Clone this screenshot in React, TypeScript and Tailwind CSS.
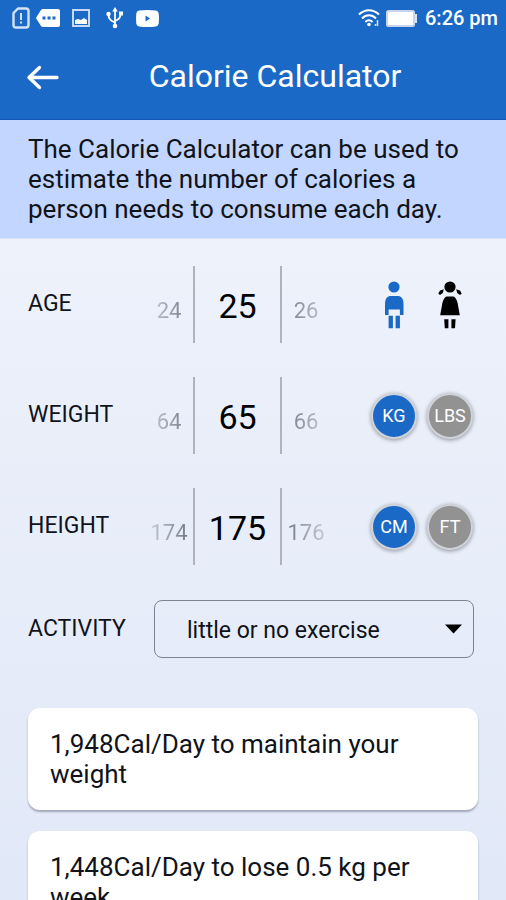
import React, { useState } from 'react';

interface PickerProps {
  label: string;
  value: number;
  onChange: (value: number) => void;
}

interface UnitToggleProps {
  name: string;
  options: string[];
  selected: string;
  onSelect: (unit: string) => void;
}

const IconSim = () => (
  <svg width="18" height="22" viewBox="0 0 18 22" fill="none">
    <path d="M6 1.500h8a2.500 2.500 0 0 1 2.500 2.500v14a2.500 2.500 0 0 1-2.500 2.500H4A2.500 2.500 0 0 1 1.500 18V6z" stroke="#d5e2f7" strokeWidth="2.400" strokeLinejoin="round" />
    <path d="M9 6v7M9 14.500v2" stroke="white" strokeWidth="1.600" />
  </svg>
);

const IconMessage = () => (
  <svg width="24" height="18" viewBox="0 0 24 18">
    <path d="M7 0h15a2 2 0 0 1 2 2v14a2 2 0 0 1-2 2H7q-1 0-2-1L.5 10q-.7-1 0-2L5 1q1-1 2-1z" fill="white" />
    <path d="M6.500 7.500h3v3h-3zM11.500 7.500h3v3h-3zM16.500 7.500h3v3h-3z" fill="#1a69c7" />
  </svg>
);

const IconPicture = () => (
  <svg width="18" height="18" viewBox="0 0 18 18" fill="none">
    <rect x="1" y="1" width="16" height="16" stroke="#c5d8f4" strokeWidth="2" />
    <path d="M3 15v-4l3-1 3 1 3-2 3 2v4z" fill="white" />
  </svg>
);

const IconUsb = () => (
  <svg width="18" height="22" viewBox="0 0 18 22" fill="none">
    <path d="M9 3v16M9 15.500C5 14 2.500 12.500 2.500 8M9 14c4-1.500 5.500-3 5.500-7" stroke="white" strokeWidth="1.800" />
    <path d="M9 0l2.800 4.500H6.200zM13 4.500h4v4h-4z" fill="white" />
    <circle cx="2.500" cy="7" r="2.200" fill="white" />
    <circle cx="9" cy="19" r="2.300" fill="white" />
  </svg>
);

const IconVideo = () => (
  <svg width="23" height="17" viewBox="0 0 23 17">
    <path d="M3 .6Q11.500-.4 20 .6 22.500 1 22.700 3.500q.5 5 0 10-.2 2.500-2.700 2.900-8.500 1-17 0Q.5 16 .3 13.500q-.5-5 0-10Q.5 1 3 .6z" fill="white" />
    <path d="M9.500 5.500l4.500 3-4.500 3z" fill="#1a69c7" />
  </svg>
);

const IconWifi = () => (
  <svg width="22" height="18" viewBox="0 0 22 18" fill="none">
    <path d="M1 5.500C7-.2 15-.2 21 5.500M4 9.500c4-4.200 10-4.200 14 0M7.300 13c2.200-2.300 5-2.300 7.200 0" stroke="white" strokeWidth="2" />
    <circle cx="11" cy="15.500" r="1.800" fill="white" />
    <path d="M19.500 11v6M17.500 15v2" stroke="#d5e2f7" strokeWidth="1.500" />
  </svg>
);

const IconBattery = () => (
  <svg width="31" height="17" viewBox="0 0 31 17">
    <rect x="1" y="1" width="27" height="15" rx="1.500" fill="white" stroke="#c9d5ee" strokeWidth="2" />
    <path d="M29 4h2v9h-2z" fill="#d5e2f7" />
  </svg>
);

const IconBack = () => (
  <svg width="34" height="27" viewBox="0 0 34 27" fill="none" stroke="white" strokeWidth="3.400" strokeLinecap="round" strokeLinejoin="round">
    <path d="M3 13.500h28M13.500 3.500L3 13.500l10.500 10" />
  </svg>
);

const IconBoy = () => (
  <svg width="20" height="48" viewBox="0 0 20 48" fill="currentColor">
    <circle cx="10" cy="6" r="5.600" />
    <path d="M5.500 15h9.500q4.500 1 4.500 8v11h-3.600v-5.500H4.600V34H1V23q0-7 4.500-8z" />
    <path d="M4.600 34.800h4.300v12.500H4.600zM11.600 34.800h4.300v12.500h-4.300z" />
  </svg>
);

const IconGirl = () => (
  <svg width="24" height="48" viewBox="0 0 24 48" fill="currentColor">
    <circle cx="12" cy="6" r="5.600" />
    <path d="M5.800 8.200L4.800 12 2 14 .3 12.500 2 9.500zM18.200 8.200l1 3.800 2.800 2 1.700-1.500-1.700-3z" />
    <path d="M8.500 15.500h7q2.800 1 4.200 7l2.100 11.800H2.200l2.100-11.800q1.400-6 4.200-7z" />
    <path d="M6.200 38.300h4.200v9H6.800zM13.400 38.300h4.200l-.6 9h-3.600z" />
  </svg>
);

const NumberPicker: React.FC<PickerProps> = ({ label, value, onChange }) => (
  <div role="group" aria-label={label} className="grid grid-cols-[48px_89px_48px] items-baseline text-center">
    <button onClick={() => onChange(value - 1)} className="bg-gradient-to-r from-gray-300 to-gray-500 bg-clip-text text-[22px] text-transparent">
      {value - 1}
    </button>
    <output className="h-[77px] border-x-2 border-[#afb3bd] text-[34px] leading-[80px] text-black">{value}</output>
    <button onClick={() => onChange(value + 1)} className="bg-gradient-to-r from-gray-500 to-gray-300 bg-clip-text text-[22px] text-transparent">
      {value + 1}
    </button>
  </div>
);

const UnitToggle: React.FC<UnitToggleProps> = ({ name, options, selected, onSelect }) => (
  <div role="group" aria-label={name} className="flex gap-2.5">
    {options.map(option => (
      <button
        key={option}
        onClick={() => onSelect(option)}
        aria-pressed={option === selected}
        className={`h-[46px] w-[46px] rounded-full border-2 border-[#d0d3d9] text-[18px] leading-none text-white shadow-[0_1px_4px_rgba(0,0,0,0.4)] ${option === selected ? 'bg-[#1a69c7]' : 'bg-[#929292]'}`}
      >
        {option}
      </button>
    ))}
  </div>
);

const FormRow: React.FC<{ label: string; children: React.ReactNode }> = ({ label, children }) => (
  <div className="flex h-[111px] items-center pr-[5px]">
    <span className="w-[117px] text-[23px]">{label}</span>
    {children}
  </div>
);

const results = [
  '1,948Cal/Day to maintain your weight',
  '1,448Cal/Day to lose 0.5 kg per week',
];

const App: React.FC = () => {
  const [age, setAge] = useState(25);
  const [weight, setWeight] = useState(65);
  const [height, setHeight] = useState(175);
  const [gender, setGender] = useState('male');
  const [weightUnit, setWeightUnit] = useState('KG');
  const [heightUnit, setHeightUnit] = useState('CM');

  return (
    <div className="flex h-screen flex-col font-['Roboto',sans-serif] text-[#10131a]">
      <header className="shrink-0 border-b border-[#1259b5] bg-[#1a69c7] text-white">
        <div className="flex h-9 items-center pr-2 pl-3">
          <IconSim />
          <div className="ml-1.5"><IconMessage /></div>
          <div className="ml-3"><IconPicture /></div>
          <div className="ml-4"><IconUsb /></div>
          <div className="ml-3"><IconVideo /></div>
          <div className="ml-auto"><IconWifi /></div>
          <div className="ml-1.5"><IconBattery /></div>
          <span className="ml-2 text-[20px] font-medium">6:26 pm</span>
        </div>
        <div className="grid h-[83px] grid-cols-[34px_1fr_16px] items-center pl-[26px]">
          <button aria-label="Back"><IconBack /></button>
          <h1 className="pb-1 text-center text-[32px] leading-9">Calorie Calculator</h1>
        </div>
      </header>

      <p className="shrink-0 border-b border-[#d8e2fb] bg-[#c2d6ff] px-7 py-[14px] text-[26px] leading-[30px]">
        The Calorie Calculator can be used to estimate the number of calories a person needs to consume each day.
      </p>

      <main className="flex-1 overflow-y-auto bg-gradient-to-b from-[#edf2fb] to-[#e1e8f7] px-7 pt-2.5 [scrollbar-width:none]">
        <FormRow label="AGE">
          <NumberPicker label="Age" value={age} onChange={setAge} />
          <div role="group" aria-label="Gender" className="ml-auto flex gap-2.5">
            <button aria-label="Male" onClick={() => setGender('male')} className={`flex w-[46px] justify-center ${gender === 'male' ? 'text-[#1a69c7]' : 'text-black'}`}>
              <IconBoy />
            </button>
            <button aria-label="Female" onClick={() => setGender('female')} className={`flex w-[46px] justify-center ${gender === 'female' ? 'text-[#1a69c7]' : 'text-black'}`}>
              <IconGirl />
            </button>
          </div>
        </FormRow>
        <FormRow label="WEIGHT">
          <NumberPicker label="Weight" value={weight} onChange={setWeight} />
          <div className="ml-auto">
            <UnitToggle name="Weight unit" options={['KG', 'LBS']} selected={weightUnit} onSelect={setWeightUnit} />
          </div>
        </FormRow>
        <FormRow label="HEIGHT">
          <NumberPicker label="Height" value={height} onChange={setHeight} />
          <div className="ml-auto">
            <UnitToggle name="Height unit" options={['CM', 'FT']} selected={heightUnit} onSelect={setHeightUnit} />
          </div>
        </FormRow>

        <div className="mt-[18px] flex items-center pr-1">
          <label htmlFor="activity" className="w-[126px] text-[23px]">ACTIVITY</label>
          <div className="relative flex-1">
            <select id="activity" className="h-[58px] w-full appearance-none rounded-lg border border-[#7d8390] bg-transparent pt-1 pl-8 text-[23px]">
              <option>little or no exercise</option>
              <option>light exercise</option>
              <option>moderate exercise</option>
              <option>heavy exercise</option>
            </select>
            <svg className="pointer-events-none absolute top-6 right-3" width="17" height="10" viewBox="0 0 17 10">
              <path d="M0 .5h17L8.500 9.500z" fill="black" />
            </svg>
          </div>
        </div>

        <div className="mt-[50px] space-y-[21px] pb-5">
          {results.map(result => (
            <div key={result} className="rounded-xl bg-white px-[22px] py-[21px] text-[26px] leading-[30px] shadow-[0_2px_2px_rgba(60,70,90,0.4)]">
              {result}
            </div>
          ))}
        </div>
      </main>
    </div>
  );
};

export default App;
